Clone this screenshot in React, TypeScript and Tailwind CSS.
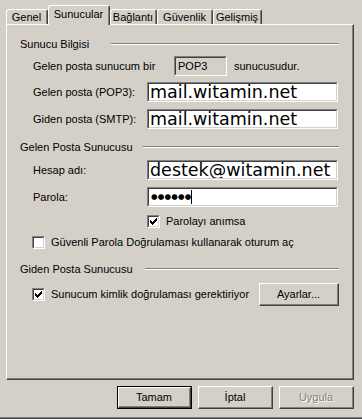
import React from "react";

const ui = "font-['Liberation_Sans',Arial,sans-serif] text-[11px] leading-[13px] text-black";

function Tab({ label, w, active }: { label: string; w: string; active?: boolean }) {
  return (
    <div
      className={
        active
          ? `relative z-10 -mb-px flex h-[20px] rounded-t-[3px] border-l border-t border-r border-l-white border-t-white border-r-[#404040] bg-[#d4d0c8] ${w}`
          : `flex h-[15px] rounded-t-[3px] border-l border-t border-r border-l-white border-t-white border-r-[#404040] ${w}`
      }
    >
      <div
        className={
          active
            ? "flex flex-1 justify-center border-r border-r-[#808080] pt-[2px]"
            : "flex flex-1 items-center justify-center border-r border-r-[#808080]"
        }
      >
        {label}
      </div>
    </div>
  );
}

function Sunken({ className, children }: { className: string; children?: React.ReactNode }) {
  return (
    <div className={`flex border border-t-[#808080] border-l-[#808080] border-r-white border-b-white ${className}`}>
      <div className="flex flex-1 items-center overflow-hidden border border-t-[#404040] border-l-[#404040] border-r-[#d4d0c8] border-b-[#d4d0c8]">
        {children}
      </div>
    </div>
  );
}

function TextBox({ value }: { value: string }) {
  return (
    <Sunken className="h-[20px] w-[191px] bg-white">
      <span className="whitespace-nowrap pl-[1px] font-['DejaVu_Sans',sans-serif] text-[17.5px] leading-[18px]">{value}</span>
    </Sunken>
  );
}

function Check({ checked }: { checked?: boolean }) {
  return (
    <Sunken className="h-[13px] w-[13px] shrink-0 bg-white">
      {checked && (
        <svg width="9" height="9" viewBox="0 0 9 9" shapeRendering="crispEdges">
          {[2, 3, 4, 3, 2, 1, 0].map((y, x) => (
            <rect key={x} x={x + 1} y={y + 1} width="1" height="3" fill="#000" />
          ))}
        </svg>
      )}
    </Sunken>
  );
}

function Button({ label, w, primary, disabled }: { label: string; w: string; primary?: boolean; disabled?: boolean }) {
  const face = (
    <div className="flex flex-1 border border-t-white border-l-white border-r-[#404040] border-b-[#404040]">
      <div className="flex flex-1 items-center justify-center border-r border-b border-r-[#808080] border-b-[#808080]">
        <span className={disabled ? "text-[#808080] [text-shadow:1px_1px_0_#fff]" : ""}>{label}</span>
      </div>
    </div>
  );
  return primary ? (
    <div className={`flex h-[23px] border border-black ${w}`}>{face}</div>
  ) : (
    <div className={`flex h-[23px] ${w}`}>{face}</div>
  );
}

function GroupHeader({ label, line }: { label: string; line: string }) {
  return (
    <div className="flex h-[16px] items-center pl-[13px]">
      <span>{label}</span>
      <div className={`ml-auto border-t border-b border-t-[#808080] border-b-white ${line}`} />
    </div>
  );
}

function Field({ label, value }: { label: string; value: string }) {
  return (
    <div className="flex h-[20px] items-center pl-[26px]">
      <span className="w-[114px]">{label}</span>
      <TextBox value={value} />
    </div>
  );
}

export default function App() {
  return (
    <div className={`flex h-[419px] w-[362px] flex-col bg-[#d4d0c8] ${ui}`}>
      <div className="flex h-[24px] items-end pl-[6px]">
        <Tab label="Genel" w="w-[42px]" />
        <Tab label="Sunucular" w="w-[62px]" active />
        <Tab label="Bağlantı" w="w-[47px]" />
        <Tab label="Güvenlik" w="w-[56px]" />
        <Tab label="Gelişmiş" w="w-[49px]" />
      </div>

      <div className="ml-[6px] flex h-[356px] w-[348px] border-l border-t border-r border-b border-l-white border-t-white border-r-[#404040] border-b-[#404040]">
        <div className="flex flex-1 flex-col border-r border-b border-r-[#808080] border-b-[#808080] pr-[13px] pt-[11px]">
          <GroupHeader label="Sunucu Bilgisi" line="w-[228px]" />

          <div className="mt-[4px] flex h-[20px] items-center pl-[26px]">
            <span className="w-[141px]">Gelen posta sunucum bir</span>
            <Sunken className="h-[20px] w-[53px]">
              <span className="pl-[2px]">POP3</span>
            </Sunken>
            <span className="ml-[7px]">sunucusudur.</span>
          </div>

          <div className="mt-[6px]">
            <Field label="Gelen posta (POP3):" value="mail.witamin.net" />
          </div>
          <div className="mt-[7px]">
            <Field label="Giden posta (SMTP):" value="mail.witamin.net" />
          </div>

          <div className="mt-[10px]">
            <GroupHeader label="Gelen Posta Sunucusu" line="w-[196px]" />
          </div>

          <div className="mt-[5px]">
            <Field label="Hesap adı:" value="destek@witamin.net" />
          </div>

          <div className="mt-[7px] flex h-[20px] items-center pl-[26px]">
            <span className="w-[114px]">Parola:</span>
            <Sunken className="h-[20px] w-[191px] bg-white">
              <span className="pl-[2px] font-['DejaVu_Sans',sans-serif] text-[7.5px] leading-[10px] tracking-[0.2px]">●●●●●●</span>
              <span className="h-[14px] w-px bg-black" />
            </Sunken>
          </div>

          <div className="mt-[8px] flex h-[13px] items-center pl-[140px]">
            <Check checked />
            <span className="ml-[6px]">Parolayı anımsa</span>
          </div>

          <div className="mt-[8px] flex h-[13px] items-center pl-[25px]">
            <Check />
            <span className="ml-[6px]">Güvenli Parola Doğrulaması kullanarak oturum aç</span>
          </div>

          <div className="mt-[12px]">
            <GroupHeader label="Giden Posta Sunucusu" line="w-[194px]" />
          </div>

          <div className="mt-[6px] flex h-[23px] items-center pl-[25px]">
            <Check checked />
            <span className="ml-[6px]">Sunucum kimlik doğrulaması gerektiriyor</span>
            <div className="ml-auto">
              <Button label="Ayarlar..." w="w-[80px]" />
            </div>
          </div>
        </div>
      </div>

      <div className="mt-[6px] flex justify-end gap-[6px] pr-[8px]">
        <Button label="Tamam" w="w-[75px]" primary />
        <Button label="İptal" w="w-[75px]" />
        <Button label="Uygula" w="w-[75px]" disabled />
      </div>

      <div className="mt-auto border-t border-b border-t-[#808080] border-b-[#404040]" />
    </div>
  );
}
